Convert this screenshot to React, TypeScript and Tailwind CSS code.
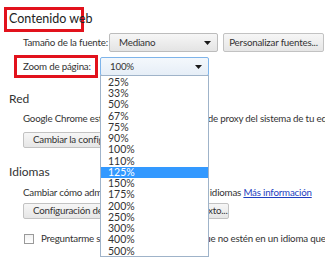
const zoomLevels = ['25%', '33%', '50%', '67%', '75%', '90%', '100%', '110%', '125%', '150%', '175%', '200%', '250%', '300%', '400%', '500%']

function Arrow() {
  return (
    <svg width="7" height="4" viewBox="0 0 7 4" className="shrink-0">
      <path d="M0 0h7L3.5 4z" fill="#1a1a1a" />
    </svg>
  )
}

function Select({ value, focused, className }: { value: string; focused?: boolean; className: string }) {
  return (
    <div
      className={`flex items-center justify-between pl-[9px] pr-[6px] rounded-[2px] border ${
        focused
          ? 'border-[#7eb4ea] bg-gradient-to-b from-[#f4f8fc] to-[#e6eef7]'
          : 'border-[#bcbcbc] bg-gradient-to-b from-[#f6f6f6] to-[#e4e4e4]'
      } ${className}`}
    >
      <span>{value}</span>
      <Arrow />
    </div>
  )
}

function Button({ label, className }: { label: string; className: string }) {
  return (
    <div
      className={`flex items-center whitespace-nowrap overflow-hidden rounded-[2px] border border-[#c2c2c2] bg-gradient-to-b from-[#f6f6f6] to-[#e6e6e6] ${className}`}
    >
      {label}
    </div>
  )
}

export default function App() {
  return (
    <div
      className="relative w-[325px] h-[261px] overflow-hidden bg-white text-[#333] text-[9.75px] tracking-[-0.2px] leading-none"
      style={{ fontFamily: 'Lato, "Noto Sans", sans-serif' }}
    >
      {/* Contenido web */}
      <div className="ml-[4px] mt-[7px] w-[80px] h-[25px] border-[3px] border-[#e2121c] flex items-center pl-[2px] text-[12.5px] tracking-normal text-[#222] whitespace-nowrap">
        Contenido web
      </div>

      <div className="flex items-center mt-[1px] h-[19px] whitespace-nowrap">
        <span className="ml-[23px] w-[86px] shrink-0">Tamaño de la fuente:</span>
        <Select value="Mediano" className="w-[109px] h-[19px]" />
        <Button label="Personalizar fuentes..." className="ml-[5px] w-[101px] h-[19px] justify-center" />
      </div>

      <div className="flex items-center mt-[3px] h-[23px]">
        <div className="ml-[14px] w-[84px] h-[23px] border-[3px] border-[#e2121c] flex items-center pl-[6px] whitespace-nowrap">
          Zoom de página:
        </div>
        <Select value="100%" focused className="ml-[2px] w-[109px] h-[19px]" />
      </div>

      {/* Red */}
      <div className="ml-[9px] mt-[15px] text-[12px] tracking-normal">Red</div>
      <div className="ml-[23px] mt-[9px] whitespace-nowrap">
        Google Chrome está usando la configuración de proxy del sistema de tu equipo para conectarse a la red.
      </div>
      <Button label="Cambiar la configuración de proxy..." className="ml-[23px] mt-[8px] w-[170px] h-[16px] pl-[9px]" />

      {/* Idiomas */}
      <div className="ml-[9px] mt-[18px] text-[12px] tracking-normal">Idiomas</div>
      <div className="ml-[23px] mt-[10px] whitespace-nowrap">
        Cambiar cómo administra Google Chrome los idiomas{' '}
        <span className="text-[#1f3fbf] underline">Más información</span>
      </div>
      <Button label="Configuración de idioma y de entrada de texto..." className="ml-[23px] mt-[5px] w-[206px] h-[16px] pl-[9px]" />
      <div className="flex items-center ml-[24px] mt-[15px] whitespace-nowrap">
        <div className="w-[10px] h-[10px] border border-[#9a9a9a] bg-gradient-to-b from-[#f2f2f2] to-[#ffffff] shrink-0" />
        <span className="ml-[7px]">Preguntarme si quiero traducir páginas que no estén en un idioma que puedo leer</span>
      </div>

      {/* Zoom dropdown list */}
      <div className="absolute left-[100px] top-[75px] w-[109px] h-[182px] bg-white border border-[#9fb3c9] py-[0.5px] text-[10.5px] tracking-normal">
        {zoomLevels.map((z) => (
          <div
            key={z}
            className={`h-[11.25px] flex items-center pl-[7px] ${z === '125%' ? 'bg-[#3399ff] text-white' : 'text-[#333]'}`}
          >
            {z}
          </div>
        ))}
      </div>
    </div>
  )
}
